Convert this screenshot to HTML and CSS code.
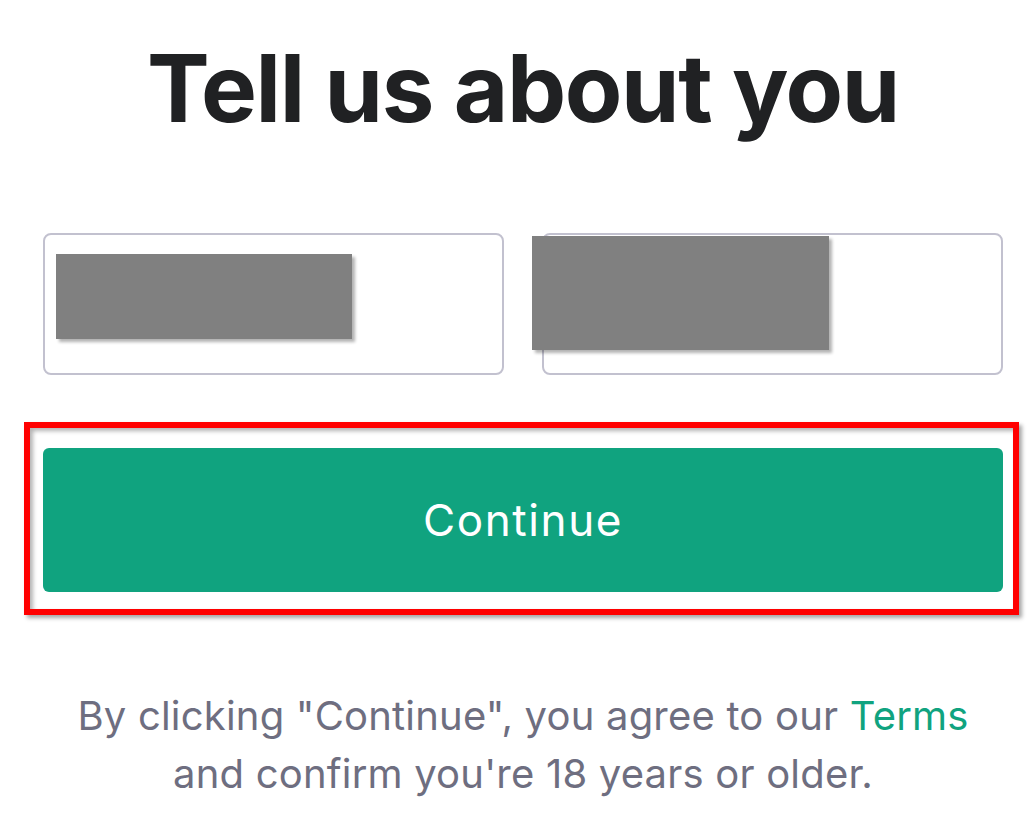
FILE: index.html
```html
<!DOCTYPE html>
<html>
<head>
<meta charset="utf-8">
<link rel="stylesheet" href="styles.css">
</head>
<body>
<main class="page">
  <h1 class="title">Tell us about you</h1>
  <div class="fields">
    <div class="field"><span class="redact redact-a"></span></div>
    <div class="field"><span class="redact redact-b"></span></div>
  </div>
  <div class="action">
    <button class="continue">Continue</button>
  </div>
  <p class="legal">By clicking "Continue", you agree to our <a class="terms">Terms</a><br>and confirm you're 18 years or older.</p>
</main>
</body>
</html>
```
FILE: styles.css
```css
* { box-sizing: border-box; }
html, body { margin: 0; padding: 0; background: #fff; }
body { font-family: Inter, "Noto Sans", sans-serif; }
.page {
  width: 960px;
  margin-left: 43px;
  display: flex;
  flex-direction: column;
}
.title {
  margin: 28px 0 0;
  font-size: 94px;
  line-height: 120px;
  font-weight: 700;
  color: #202123;
  text-align: center;
  letter-spacing: -1.4px;
}
.fields {
  display: flex;
  gap: 38px;
  margin-top: 85px;
}
.field {
  position: relative;
  flex: 1;
  height: 142px;
  border: 2px solid #c2c1cf;
  border-radius: 8px;
}
.redact {
  position: absolute;
  background: #808080;
  box-shadow: 3px 3px 3px rgba(0,0,0,0.3);
}
.redact-a { left: 11px; top: 19px; width: 296px; height: 85px; }
.redact-b { left: -12px; top: 1px; width: 297px; height: 114px; }
.action {
  position: relative;
  margin-top: 73px;
}
.action::before {
  content: "";
  position: absolute;
  left: -19px;
  top: -26px;
  right: -16px;
  bottom: -23px;
  border: 6px solid #ff0000;
  box-shadow: 3px 3px 4px rgba(0,0,0,0.35), inset 3px 3px 4px rgba(0,0,0,0.3);
  pointer-events: none;
}
.continue {
  display: block;
  width: 100%;
  height: 144px;
  border: 0;
  border-radius: 6px;
  background: #10a37f;
  color: #fff;
  font-family: Inter, "Noto Sans", sans-serif;
  font-size: 44px;
  letter-spacing: 1.6px;
  font-weight: 400;
}
.legal {
  margin: 95px 0 0;
  text-align: center;
  color: #6e6e80;
  font-size: 40px;
  line-height: 58px;
  letter-spacing: 0.2px;
}
.terms { color: #10a37f; text-decoration: none; }
```
